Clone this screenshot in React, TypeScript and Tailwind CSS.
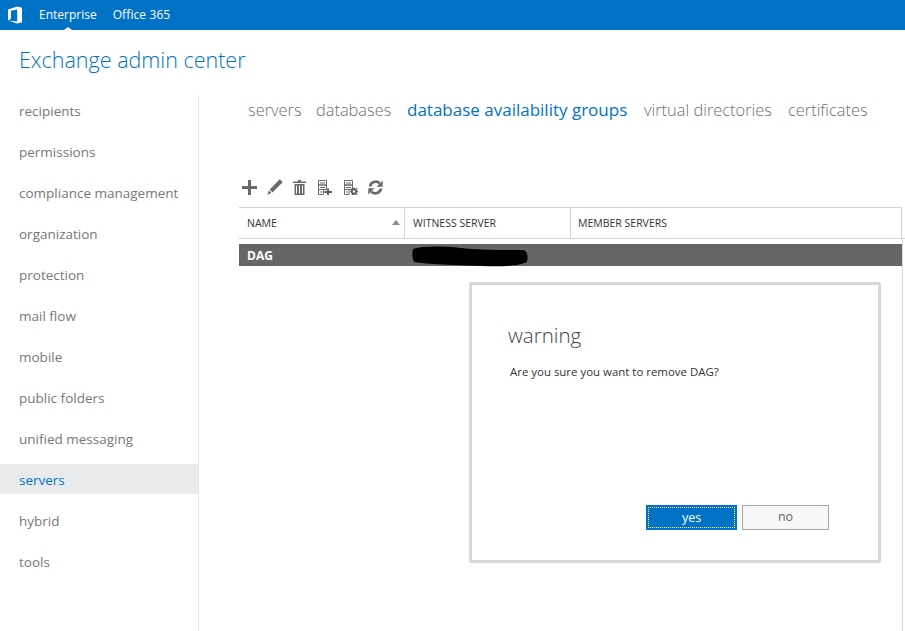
import React from 'react';

const NAV = [
  'recipients',
  'permissions',
  'compliance management',
  'organization',
  'protection',
  'mail flow',
  'mobile',
  'public folders',
  'unified messaging',
  'servers',
  'hybrid',
  'tools',
];

const TABS = [
  { label: 'servers', w: 'w-[68px]' },
  { label: 'databases', w: 'w-[91px]' },
  { label: 'database availability groups', w: 'w-[237px]' },
  { label: 'virtual directories', w: 'w-[144px]' },
  { label: 'certificates', w: 'w-[90px]' },
];

function OfficeLogo() {
  return (
    <svg width="16" height="18" viewBox="0 0 16 18" className="fill-white">
      <path d="M1 3.6 10.2 0.4 15 1.8V16.2L10.2 17.6 1 14.4 10.2 15.6V3.4L4 4.8V12.6L1 14.4Z" />
    </svg>
  );
}

function ToolbarIcons() {
  return (
    <div className="flex items-center h-[20px] pl-[3px]">
      {/* add */}
      <svg width="15" height="15" viewBox="0 0 15 15" className="fill-[#6a6a6a]">
        <path d="M6 0h3v6h6v3H9v6H6V9H0V6h6z" />
      </svg>
      {/* edit */}
      <svg width="16" height="16" viewBox="0 0 16 16" className="fill-[#6a6a6a] ml-[10px]">
        <path d="M12.800 0.300 15.700 3.200 5.500 13.400 2.600 10.500zM2 11.500 4.500 14 0.300 15.700z" />
      </svg>
      {/* delete */}
      <svg width="13" height="15" viewBox="0 0 13 15" className="fill-[#6a6a6a] ml-[10px]">
        <path d="M5 0h3v1.500h5V3H0V1.500h5zM1.500 4h10v11h-10zM3 5.500v8h1v-8zM6 5.500v8h1v-8zM9 5.500v8h1v-8z" />
      </svg>
      {/* new server */}
      <svg width="14" height="15" viewBox="0 0 14 15" className="ml-[12px]">
        <path d="M.500.500h8v4.500h-8zM.500 5h8v4.500h-8zM.500 9.500h5v5h-5z" fill="none" stroke="#6a6a6a" strokeWidth="1" />
        <path d="M2 2.500h5v1H2zM2 7h5v1H2zM2 11.500h2.500v1H2z" fill="#6a6a6a" />
        <path d="M9 8.500h2v2.500h3v2h-3v2H9v-2H6.500v-2H9z" fill="#5c5c5c" />
      </svg>
      {/* server settings */}
      <svg width="14" height="15" viewBox="0 0 14 15" className="ml-[12px]">
        <path d="M.500.500h8v4.500h-8zM.500 5h8v4.500h-8zM.500 9.500h4.500v5H.500z" fill="none" stroke="#6a6a6a" strokeWidth="1" />
        <path d="M2 2.500h5v1H2zM2 7h5v1H2zM2 11.500h2v1H2z" fill="#6a6a6a" />
        <circle cx="10" cy="11.500" r="2.200" fill="none" stroke="#5c5c5c" strokeWidth="1.800" />
        <path d="M9.200 7.800h1.600v1.400H9.200zM9.200 13.800h1.600v1.200H9.200zM6.300 10.700h1.400v1.600H6.300zM12.300 10.700H14v1.600h-1.700zM7.300 8.800l1-1 1 1-1 1zM11.700 8.800l1-1 1 1-1 1zM7.300 14.200l1-1 1 1-1 .8zM11.700 14.200l1-1 1 1-1 .8z" fill="#5c5c5c" />
      </svg>
      {/* refresh */}
      <svg width="15" height="15" viewBox="0 0 15 15" className="ml-[10px]">
        <path d="M2 6.500A5.700 5.700 0 0 1 11.600 3.300" fill="none" stroke="#6a6a6a" strokeWidth="2.600" />
        <path d="M13 8.500A5.700 5.700 0 0 1 3.400 11.700" fill="none" stroke="#6a6a6a" strokeWidth="2.600" />
        <path d="M14.700 0.500V6.700H8.500zM0.300 14.500V8.300H6.500z" fill="#6a6a6a" />
      </svg>
    </div>
  );
}

export default function App() {
  return (
    <div className="relative w-[905px] h-[631px] overflow-hidden bg-white font-['Open_Sans','Liberation_Sans',sans-serif] text-[#707070]">
      {/* Top bar */}
      <div className="flex items-center h-[30px] bg-[#0072c6] text-white text-[12px]">
        <div className="flex justify-center w-[29px] pl-[1px]">
          <OfficeLogo />
        </div>
        <div className="relative ml-[10px] h-full flex items-center">
          Enterprise
          <div className="absolute bottom-0 left-[25px] border-x-[4px] border-b-[3px] border-x-transparent border-b-white" />
        </div>
        <span className="ml-[16px] tracking-[0.1px]">Office 365</span>
      </div>

      {/* Title */}
      <div className="h-[65px] pl-[19px] pt-[13px] text-[21.500px] font-light leading-[34px] text-[#0072c6]">
        Exchange admin center
      </div>

      <div className="flex h-[536px]">
        {/* Side nav */}
        <nav className="flex flex-col gap-[11px] w-[199px] shrink-0 border-r border-[#e6e6e6] text-[13.500px] text-[#777]">
          {NAV.map((item) => (
            <div
              key={item}
              className={
                item === 'servers'
                  ? 'h-[30px] pl-[19px] leading-[32px] bg-[#e9eaec] text-[#0072c6]'
                  : 'h-[30px] pl-[19px] leading-[32px]'
              }
            >
              {item}
            </div>
          ))}
        </nav>

        <main className="flex-1 pl-[40px]">
          {/* Tabs */}
          <div className="flex h-[82px] pl-[9px] pt-[2px] text-[16.400px] font-light leading-[26px] whitespace-nowrap">
            {TABS.map((tab) => (
              <span
                key={tab.label}
                className={
                  tab.label === 'database availability groups'
                    ? `${tab.w} text-[17px] font-normal text-[#0072c6]`
                    : tab.w
                }
              >
                {tab.label}
              </span>
            ))}
          </div>

          <ToolbarIcons />

          {/* Table head */}
          <div className="flex mt-[10px] w-[666px] h-[32px] border-b border-[#d4d4d4] text-[10.500px] text-[#333] leading-[30px]">
            <div className="flex w-[663px] h-full border-t border-r border-[#d4d4d4]">
              <div className="relative w-[166px] pl-[8px] border-r border-[#d4d4d4]">
                NAME
                <div className="absolute right-[4px] top-[12px] border-x-[4px] border-b-[5px] border-x-transparent border-b-[#888]" />
              </div>
              <div className="w-[166px] pl-[8px] border-r border-[#d4d4d4]">WITNESS SERVER</div>
              <div className="flex-1 pl-[7px]">MEMBER SERVERS</div>
            </div>
          </div>

          {/* Rows, with the list's right edge line */}
          <div className="w-[664px] h-[393px] pt-[5px] border-r border-[#d4dadd]">
            <div className="relative h-[22px] bg-[#666] text-white text-[12px] font-bold leading-[23px] pl-[8px]">
              DAG
              <svg width="118" height="22" viewBox="0 0 118 22" className="absolute left-[172px] top-[1px]">
                <path d="M2 4C12 1 30 1 50 3 68 5 84 5 112 5 117 6 117 12 116 17 108 21 88 22 72 21 50 20 22 20 3 17 1 13 1 8 2 4Z" fill="#000" />
              </svg>
            </div>
          </div>
        </main>
      </div>

      {/* Confirm dialog */}
      <div className="absolute left-[469px] top-[282px] w-[412px] h-[281px] rounded-[2px] border-[3px] border-[#d8d8d8] bg-white">
        <div className="pl-[36px] pt-[35px] text-[20.500px] font-light leading-[30px] text-[#444]">warning</div>
        <div className="pl-[38px] pt-[12px] text-[11.450px] leading-[20px] text-[#333]">
          Are you sure you want to remove DAG?
        </div>
        <div className="absolute left-[174px] top-[220px] flex gap-[5px] text-[12.500px]">
          <button className="w-[91px] h-[25px] p-[2px] bg-[#0072c6] text-white">
            <span className="flex items-center justify-center h-full pt-[1px] border border-dotted border-white">yes</span>
          </button>
          <button className="w-[87px] h-[25px] border border-[#a0a8a8] bg-[#f7f7f7] text-[#666]">no</button>
        </div>
      </div>
    </div>
  );
}
